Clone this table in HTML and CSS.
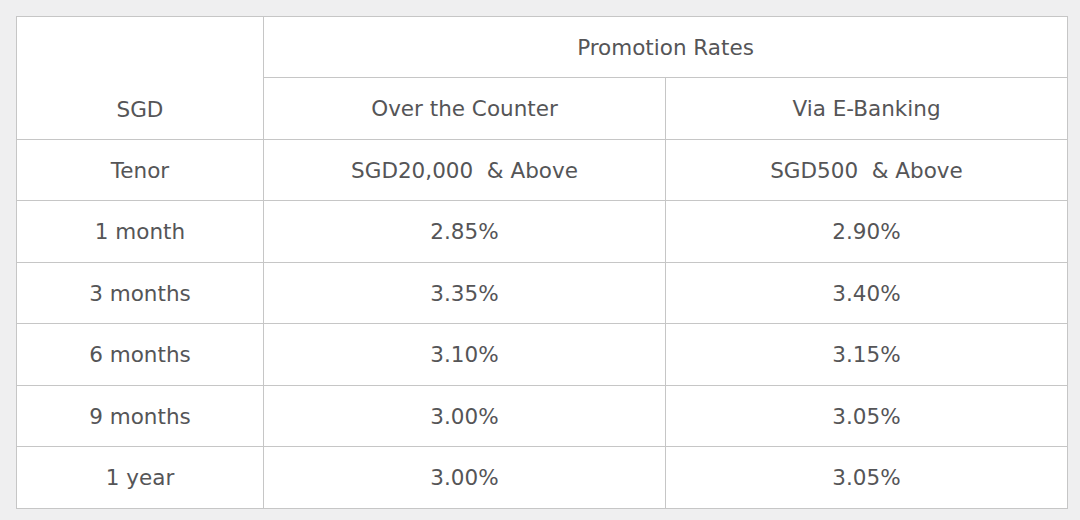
FILE: index.html
```html
<!DOCTYPE html>
<html>
<head>
<meta charset="utf-8">
<link rel="stylesheet" href="styles.css">
</head>
<body>
<div class="page">
<table class="rates">
  <colgroup>
    <col class="c1"><col class="c2"><col class="c3">
  </colgroup>
  <tr class="r-a">
    <td rowspan="2" class="sgd">SGD</td>
    <td colspan="2">Promotion Rates</td>
  </tr>
  <tr class="r-b">
    <td>Over the Counter</td>
    <td>Via E-Banking</td>
  </tr>
  <tr class="r-a"><td>Tenor</td><td>SGD20,000&nbsp; &amp; Above</td><td>SGD500&nbsp; &amp; Above</td></tr>
  <tr class="r-b"><td>1 month</td><td>2.85%</td><td>2.90%</td></tr>
  <tr class="r-a"><td>3 months</td><td>3.35%</td><td>3.40%</td></tr>
  <tr class="r-b"><td>6 months</td><td>3.10%</td><td>3.15%</td></tr>
  <tr class="r-a"><td>9 months</td><td>3.00%</td><td>3.05%</td></tr>
  <tr class="r-b"><td>1 year</td><td>3.00%</td><td>3.05%</td></tr>
</table>
</div>
</body>
</html>
```
FILE: styles.css
```css
html, body {
  margin: 0;
  padding: 0;
  background: #efeff0;
  width: 1080px;
  height: 520px;
  overflow: hidden;
}
.page {
  padding: 16px 14px 0 16px;
}
.rates {
  width: 1051px;
  border-collapse: collapse;
  background: #ffffff;
  font-family: "DejaVu Sans", "Liberation Sans", sans-serif;
  font-size: 21.5px;
  color: #555557;
  table-layout: fixed;
}
.c1 { width: 247px; }
.c2 { width: 402px; }
.c3 { width: 402px; }
.rates td {
  border: 1px solid #c6c6c6;
  text-align: center;
  vertical-align: middle;
  padding: 0;
  white-space: nowrap;
}
.r-a { height: 61px; }
.r-b { height: 62px; }
.rates td.sgd {
  vertical-align: bottom;
  padding-bottom: 17px;
}
```
